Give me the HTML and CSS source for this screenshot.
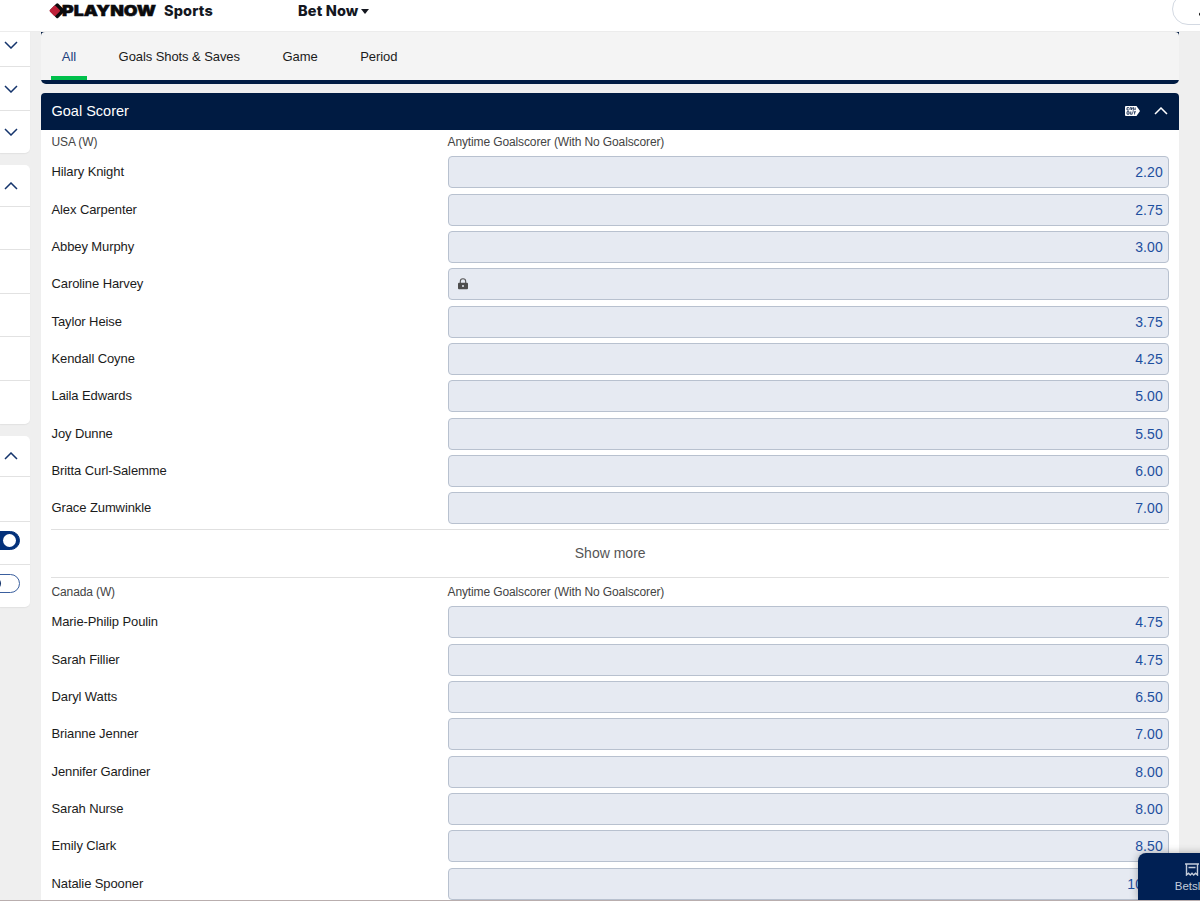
FILE: index.html
```html
<!DOCTYPE html>
<html lang="en">

<head>
  <meta charset="UTF-8">
  <meta name="viewport" content="width=device-width, initial-scale=1.0">
  <title>PlayNow Sports</title>
  <link rel="stylesheet" href="styles.css">
</head>

<body>
  <header class="header">
    <a class="logo" href="#">
      <svg width="110" height="20" viewBox="0 0 110 20">
        <rect x="3.6" y="5" width="11.4" height="11.4" rx="1.5" fill="#0b0b0d" transform="rotate(45 9.3 10.7)" />
        <rect x="2.8" y="6.7" width="8" height="8" rx="1" fill="#bd2038" transform="rotate(45 6.8 10.7)" />
        <text class="logo-text" x="14" y="16.2" textLength="94" lengthAdjust="spacingAndGlyphs">PLAYNOW</text>
      </svg>
    </a>
    <a class="product" href="#">Sports</a>
    <a class="bet-now" href="#">Bet Now <i class="caret"></i></a>
    <div class="search">
      <svg width="8" height="8" viewBox="0 0 8 8"><path d="M0 5L3 2" stroke="#222" stroke-width="2" /></svg>
    </div>
  </header>

  <div class="page">
    <aside class="side">
      <div class="card card-first">
        <div class="item"><svg class="chev" viewBox="0 0 14 8"><path d="M1 1l6 6 6-6" /></svg></div>
        <div class="item"><svg class="chev" viewBox="0 0 14 8"><path d="M1 1l6 6 6-6" /></svg></div>
        <div class="item"><svg class="chev" viewBox="0 0 14 8"><path d="M1 1l6 6 6-6" /></svg></div>
      </div>
      <div class="card card-list">
        <div class="item head"><svg class="chev" viewBox="0 0 14 8"><path d="M1 7l6-6 6 6" /></svg></div>
        <div class="item"></div>
        <div class="item"></div>
        <div class="item"></div>
        <div class="item"></div>
        <div class="item"></div>
      </div>
      <div class="card card-settings">
        <div class="item head"><svg class="chev" viewBox="0 0 14 8"><path d="M1 7l6-6 6 6" /></svg></div>
        <div class="item tall"></div>
        <div class="item"><span class="toggle on"></span></div>
        <div class="item"><span class="toggle"></span></div>
      </div>
    </aside>

    <main class="main">
      <div class="tabs-wrap">
        <nav class="tabs">
          <a class="active" href="#">All</a>
          <a href="#">Goals Shots &amp; Saves</a>
          <a href="#">Game</a>
          <a href="#">Period</a>
        </nav>
      </div>

      <section class="market">
        <div class="market-head">
          <h2>Goal Scorer</h2>
          <svg class="cashout" width="15" height="10" viewBox="0 0 15 10">
            <path d="M1 0h10.5L15 5l-3.5 5H1Q0 10 0 9V1Q0 0 1 0z" fill="#fff" />
            <path d="M4 1.7H2v2.3h2M5 4V1.7h1.5V4M9 1.7H7.7v1H9V4H7.6M10.2 1.5v2.6M2 5.7h2v2.5H2zM5.3 5.5v2.7h1.9V5.5M8.3 5.8H11M9.6 6v2.5" fill="none" stroke="#001b42" stroke-width=".8" />
          </svg>
          <svg class="chev light" viewBox="0 0 14 8"><path d="M1 7l6-6 6 6" /></svg>
        </div>

        <div class="labels"><span>USA (W)</span><span>Anytime Goalscorer (With No Goalscorer)</span></div>
        <div class="rows" id="usa"></div>
        <div class="more"><a href="#">Show more</a></div>
        <div class="labels"><span>Canada (W)</span><span>Anytime Goalscorer (With No Goalscorer)</span></div>
        <div class="rows" id="canada"></div>
      </section>
    </main>
  </div>

  <div class="betslip">
    <svg width="14" height="13" viewBox="0 0 14 13">
      <path d="M0 1h14M1.5 1v11l2-1.8 1.8 1.8L7 10.2l1.7 1.8 1.8-1.8 2 1.8V1M3.5 4.5h7" fill="none" stroke="#c3ccda" stroke-width="1.4" />
    </svg>
    <span>Betslip</span>
  </div>

  <script>
    const usa = [
      ['Hilary Knight', '2.20'],
      ['Alex Carpenter', '2.75'],
      ['Abbey Murphy', '3.00'],
      ['Caroline Harvey', null],
      ['Taylor Heise', '3.75'],
      ['Kendall Coyne', '4.25'],
      ['Laila Edwards', '5.00'],
      ['Joy Dunne', '5.50'],
      ['Britta Curl-Salemme', '6.00'],
      ['Grace Zumwinkle', '7.00']
    ]

    const canada = [
      ['Marie-Philip Poulin', '4.75'],
      ['Sarah Fillier', '4.75'],
      ['Daryl Watts', '6.50'],
      ['Brianne Jenner', '7.00'],
      ['Jennifer Gardiner', '8.00'],
      ['Sarah Nurse', '8.00'],
      ['Emily Clark', '8.50'],
      ['Natalie Spooner', '10.00']
    ]

    // shown instead of the price when a selection is suspended
    const lock = `
      <svg class="lock" width="10" height="12" viewBox="0 0 10 12">
        <path d="M2.3 5V3.4a2.7 2.7 0 0 1 5.4 0V5" fill="none" stroke="#555" stroke-width="1.1" />
        <rect y="4.7" width="10" height="6.6" rx="1" fill="#4d4d4d" />
        <circle cx="5" cy="8" r="1" fill="#e6eaf2" />
      </svg>`

    const render = (id, players) => {
      document.getElementById(id).innerHTML = players.map(([name, price]) => `
        <div class="row">
          <span>${name}</span>
          <button class="price">${price || lock}</button>
        </div>`).join('')
    }

    render('usa', usa)
    render('canada', canada)
  </script>
</body>

</html>
```
FILE: styles.css
```css
* {
  box-sizing: border-box;
  margin: 0;
  padding: 0;
}

body {
  height: 901px;
  overflow: hidden;
  position: relative;
  display: flex;
  flex-direction: column;
  background: #efefef;
  font-family: "Liberation Sans", Arial, sans-serif;
  font-size: 13px;
  color: #1b1b1b;
  border-bottom: 1px solid #b9aeae;
}

a {
  color: inherit;
  text-decoration: none;
}

.header {
  flex: none;
  display: flex;
  height: 32px;
  padding-left: 48px;
  background: #fff;
  border-bottom: 1px solid #ececec;
  font: 800 14.5px/21px Inter, sans-serif;
  letter-spacing: .15px;
  color: #14171f;
  overflow: hidden;
}

.logo {
  width: 116px;
  height: 20px;
  letter-spacing: 0;
}

.logo svg {
  display: block;
}

.logo-text {
  font: 900 15px Inter, sans-serif;
  fill: #0b0b0d;
  stroke: #0b0b0d;
  stroke-width: .5;
}

.product {
  width: 134px;
}

.caret {
  display: inline-block;
  margin-left: -1px;
  border: 4.5px solid transparent;
  border-top: 5px solid #14171f;
  border-bottom: 0;
  vertical-align: 2px;
}

.search {
  flex: none;
  width: 120px;
  height: 32px;
  margin: -7px -92px 0 auto;
  padding: 16px 0 0 26px;
  border: 1px solid #d3d9e2;
  border-radius: 16px;
}

.search svg {
  display: block;
}

.page {
  flex: 1;
  min-height: 0;
  display: flex;
  gap: 11px;
  overflow: hidden;
}

/* left column */
.side {
  flex: none;
  width: 30px;
  display: flex;
  flex-direction: column;
  gap: 12px;
}

.card {
  background: #fff;
  border-radius: 0 5px 5px 0;
  box-shadow: 0 1px 1px #e2e2e2;
  overflow: hidden;
}

.card-first {
  margin-top: -9px;
}

.item {
  display: flex;
  align-items: center;
  height: 43.4px;
  border-bottom: 1px solid #e2e2e2;
}

.item:last-child {
  border-bottom: 0;
}

.card-first .item {
  height: 44px;
}

.card-first .item:first-child {
  padding-top: 1px;
}

.card-first .item:last-child {
  height: 42px;
}

.head {
  height: 42px;
}

.card-list .item:last-child {
  height: 43.4px;
}

.card-settings .item {
  height: 43px;
}

.card-settings .head {
  height: 41.5px;
}

.card-settings .tall {
  height: 45px;
}

.card-settings .item:last-child {
  height: 42px;
}

.chev {
  width: 14px;
  height: 8px;
  margin-left: 4px;
  fill: none;
  stroke: #14346c;
  stroke-width: 1.5;
}

.chev.light {
  margin: 0;
  stroke: #fff;
}

.toggle {
  width: 36px;
  height: 19px;
  margin: -6px 0 0 -16px;
  padding: 2px;
  border: 1px solid #3a5f9e;
  border-radius: 10px;
}

.toggle::after {
  content: "";
  display: block;
  width: 13px;
  height: 13px;
  margin-left: 1px;
  border-radius: 50%;
  background: #14346c;
}

.toggle.on {
  background: #04317a;
  border-color: #04317a;
}

.toggle.on::after {
  margin-left: 16px;
  background: #fff;
}

/* markets */
.main {
  flex: none;
  width: 1138px;
}

.tabs-wrap {
  height: 52px;
  background: #001b42;
  border-radius: 0 0 5px 5px;
}

.tabs {
  display: flex;
  height: 48px;
  padding-left: 10px;
  gap: 21px;
  background: #f4f4f4;
  border-radius: 4px 4px 0 0;
  font-size: 13px;
  letter-spacing: -.08px;
}

.tabs a {
  padding: 0 10.8px;
  line-height: 50px;
}

.tabs .active {
  color: #1c3f7c;
  border-bottom: 4px solid #00c04b;
}

.market {
  margin-top: 9px;
  padding-bottom: 20px;
  background: #fff;
  border-radius: 4px 4px 0 0;
}

.market-head {
  display: flex;
  align-items: center;
  gap: 14px;
  height: 37px;
  padding: 0 11px 2px 10.5px;
  background: #001b42;
  border-radius: 4px 4px 0 0;
  color: #fff;
}

.market-head h2 {
  flex: 1;
  font-size: 14.5px;
  font-weight: 400;
}

.labels,
.row {
  display: grid;
  grid-template-columns: 396px 1fr;
  padding: 0 10px 0 10.5px;
}

.labels {
  height: 26.4px;
  line-height: 25px;
  font-size: 12px;
  letter-spacing: -.12px;
  color: #444;
}

.row {
  height: 37.34px;
  line-height: 32px;
  letter-spacing: -.1px;
}

.price {
  height: 32px;
  padding: 0 5px;
  background: #e6eaf2;
  border: 1px solid #b8c1cf;
  border-radius: 4px;
  font: 14px "Liberation Sans", Arial, sans-serif;
  letter-spacing: .15px;
  color: #1d4f9f;
  text-align: right;
}

.lock {
  display: block;
  margin-left: 4px;
}

.more {
  height: 48.5px;
  margin: -.5px 10px 2.3px 10.4px;
  border: solid #e0e0e0;
  border-width: 1px 0;
  line-height: 47px;
  font-size: 14px;
  color: #555;
  text-align: center;
}

/* floating button over the page corner */
.betslip {
  position: absolute;
  left: 1138px;
  top: 853px;
  width: 108px;
  height: 47px;
  display: flex;
  flex-direction: column;
  align-items: center;
  padding-top: 10px;
  background: #002054;
  border-radius: 8px 0 0 0;
  box-shadow: 0 0 8px rgba(0, 0, 0, .3);
  font-size: 11.5px;
  color: #c3ccda;
}

.betslip span {
  margin-top: 4px;
}
```
